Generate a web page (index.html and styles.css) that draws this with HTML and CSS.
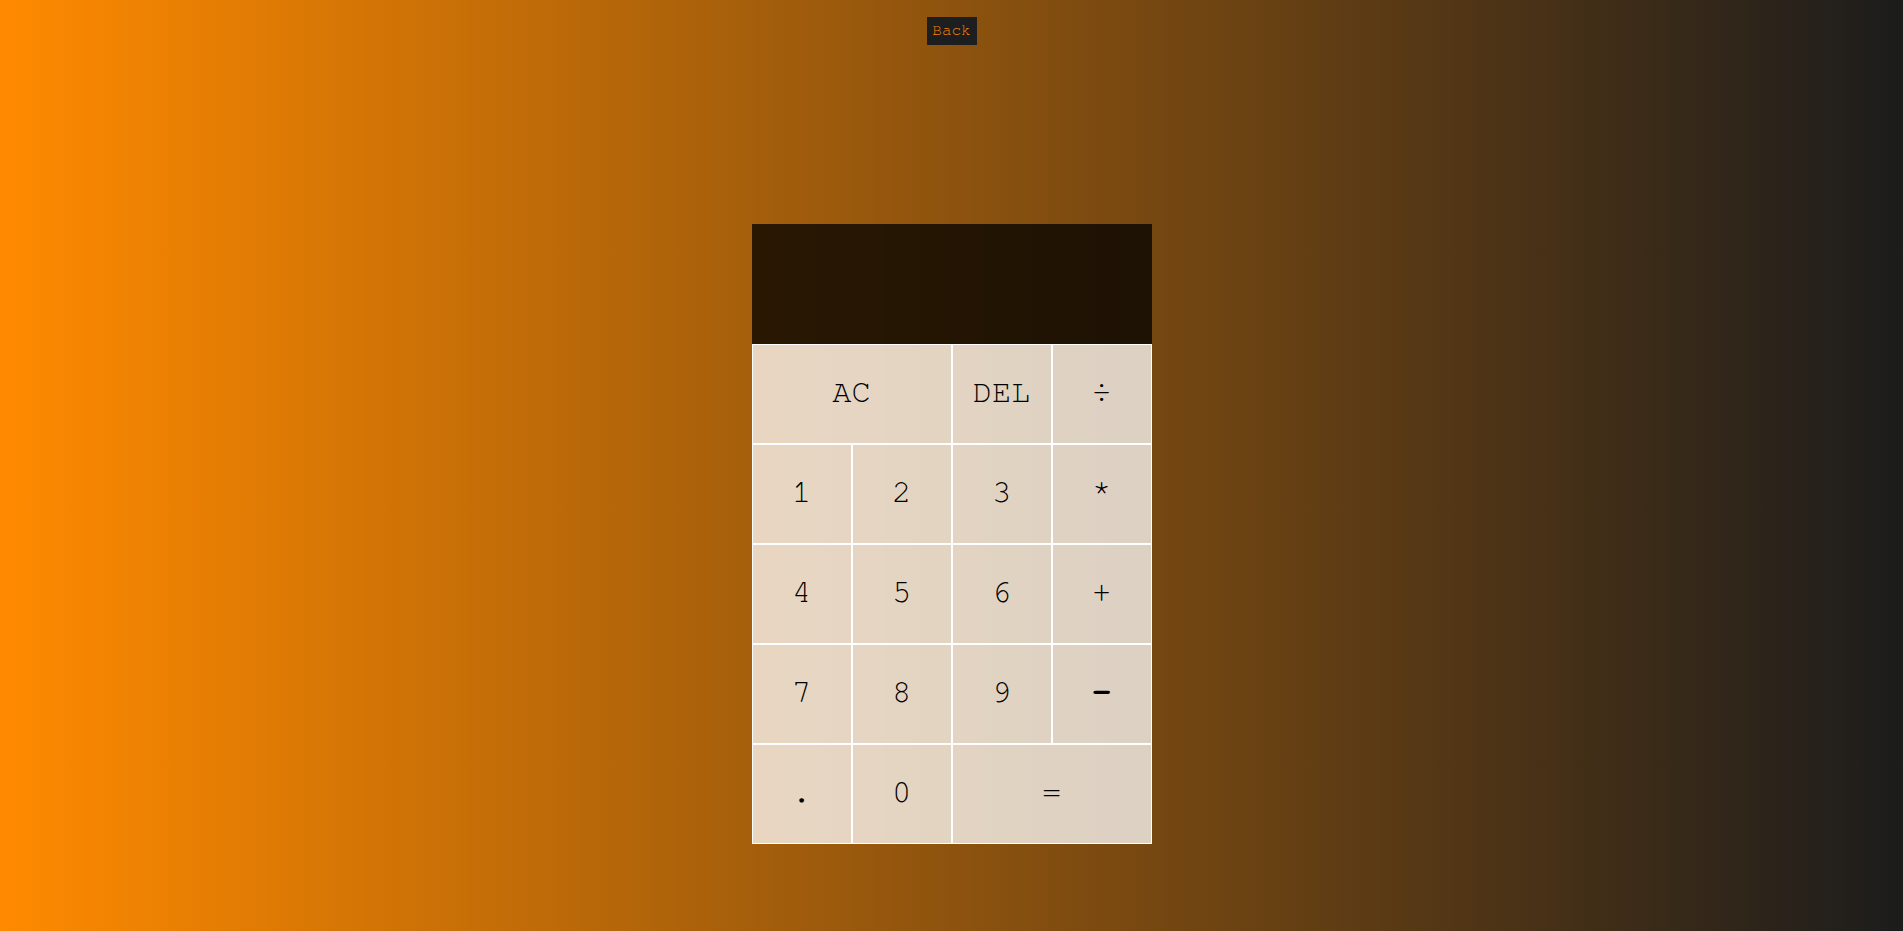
FILE: index.html
```html
<!DOCTYPE html>
<html lang="en">
<head>
<meta charset="utf-8">
<title>Calculator</title>
<link rel="stylesheet" href="styles.css">
</head>
<body>
<header class="top">
  <button class="back">Back</button>
</header>
<main class="calculator">
  <div class="output">
    <div class="previous"></div>
    <div class="current"></div>
  </div>
  <button class="key span-two">AC</button>
  <button class="key">DEL</button>
  <button class="key">÷</button>
  <button class="key">1</button>
  <button class="key">2</button>
  <button class="key">3</button>
  <button class="key">*</button>
  <button class="key">4</button>
  <button class="key">5</button>
  <button class="key">6</button>
  <button class="key">+</button>
  <button class="key">7</button>
  <button class="key">8</button>
  <button class="key">9</button>
  <button class="key key-minus">-</button>
  <button class="key">.</button>
  <button class="key">0</button>
  <button class="key span-two">=</button>
</main>
</body>
</html>
```
FILE: styles.css
```css
* { box-sizing: border-box; }
html, body { height: 100%; }
body {
  margin: 0;
  background: linear-gradient(to right, #ff8a00, #1c1c1c);
  font-family: "FreeMono", "Courier New", "Liberation Mono", monospace;
  overflow: hidden;
}
.top {
  display: flex;
  justify-content: center;
  padding-top: 17px;
}
.back {
  width: 50px;
  height: 28px;
  padding: 0 0 2px;
  border: none;
  background: #1c1e1f;
  color: #ff8000;
  font-family: "FreeMono", "Courier New", "Liberation Mono", monospace;
  font-size: 16px;
  cursor: pointer;
}
.calculator {
  display: grid;
  justify-content: center;
  grid-template-columns: repeat(4, 100px);
  grid-template-rows: 120px repeat(5, 100px);
  margin-top: 179px;
}
.output {
  grid-column: 1 / -1;
  background: rgba(0, 0, 0, 0.75);
}
.key {
  font-family: "FreeMono", "Courier New", "Liberation Mono", monospace;
  font-size: 32px;
  color: #000;
  border: 1px solid #fff;
  background: rgba(255, 255, 255, 0.75);
  outline: none;
  padding: 0 0 5px;
  cursor: pointer;
}
.key-minus { font-weight: bold; }
.span-two { grid-column: span 2; }
```
